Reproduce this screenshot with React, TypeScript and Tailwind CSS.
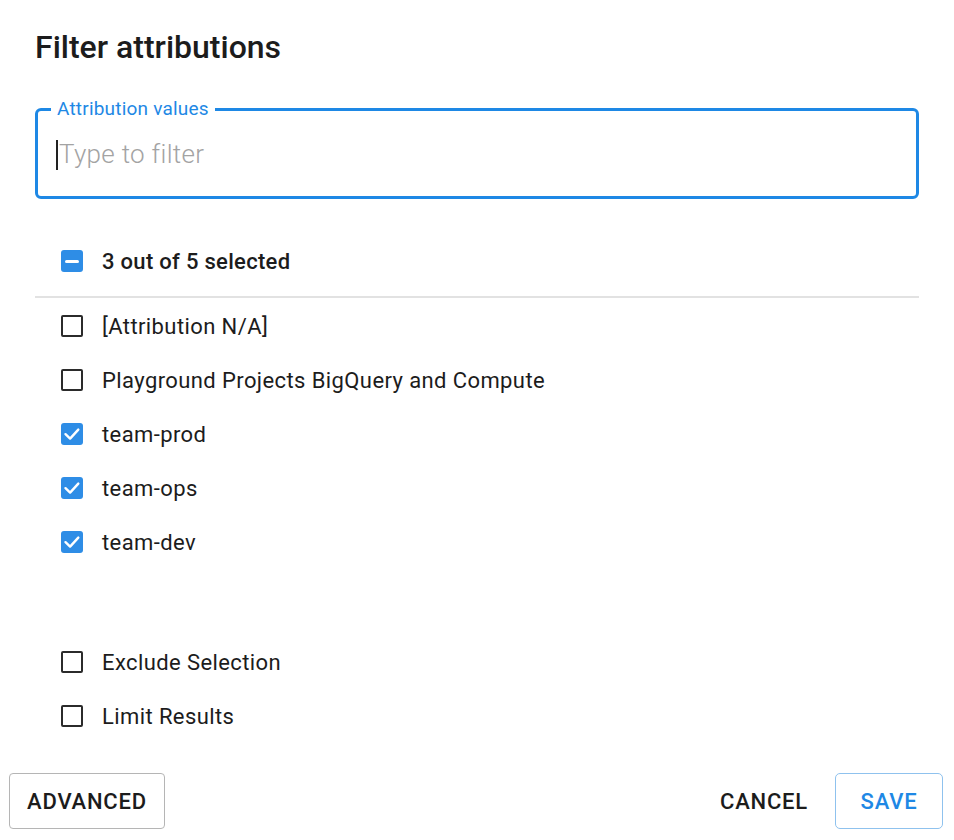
import React, { useState } from 'react';

type Item = { label: string; checked: boolean };

const Box: React.FC<{ checked: boolean; indeterminate?: boolean }> = ({ checked, indeterminate }) => {
  if (indeterminate) {
    return (
      <div className="w-[22px] h-[22px] rounded-[3px] bg-[#2e8de6] flex items-center justify-center shrink-0">
        <div className="w-[14px] h-[3px] rounded-full bg-white" />
      </div>
    );
  }
  if (checked) {
    return (
      <div className="w-[22px] h-[22px] rounded-[3px] bg-[#2e8de6] flex items-center justify-center shrink-0">
        <svg width="22" height="22" viewBox="0 0 22 22" fill="none">
          <path d="M4.5 11.2l4.6 4.4 8.2-9" stroke="white" strokeWidth="2.4" strokeLinecap="round" strokeLinejoin="round" />
        </svg>
      </div>
    );
  }
  return <div className="w-[22px] h-[22px] rounded-[2px] border-2 border-[#2b2b2b] shrink-0" />;
};

const Row: React.FC<{ item: Item; onToggle: () => void }> = ({ item, onToggle }) => (
  <div onClick={onToggle} className="h-[54px] flex items-center gap-[19px] pl-[26px] cursor-pointer">
    <Box checked={item.checked} />
    <span className="text-[22px] tracking-[0.4px] text-[#1c1c1c]">{item.label}</span>
  </div>
);

const App: React.FC = () => {
  const [items, setItems] = useState<Item[]>([
    { label: '[Attribution N/A]', checked: false },
    { label: 'Playground Projects BigQuery and Compute', checked: false },
    { label: 'team-prod', checked: true },
    { label: 'team-ops', checked: true },
    { label: 'team-dev', checked: true },
  ]);
  const [exclude, setExclude] = useState(false);
  const [limit, setLimit] = useState(false);

  const selected = items.filter(i => i.checked).length;

  const toggle = (idx: number) => {
    setItems(prev => prev.map((it, i) => (i === idx ? { ...it, checked: !it.checked } : it)));
  };

  return (
    <div className="w-[954px] h-[840px] bg-white font-['Roboto',sans-serif] text-[#1c1c1c] relative">
      <div className="px-[35px] pt-[26px]">
        <h1 className="text-[32px] font-medium leading-[42px]">Filter attributions</h1>

        {/* Search field */}
        <div className="relative mt-[40px] h-[91px] border-[3px] border-[#1e88e5] rounded-[6px] flex items-center px-[18px]">
          <span className="absolute -top-[13px] left-[13px] bg-white px-[6px] text-[19px] leading-[22px] tracking-[0.2px] text-[#1e88e5]">
            Attribution values
          </span>
          <div className="flex items-center mt-[2px]">
            <div className="w-[2px] h-[30px] bg-[#222]" />
            <span className="ml-[1px] text-[26px] tracking-[0.3px] text-[#a3a3a3] font-light">Type to filter</span>
          </div>
        </div>

        {/* Select all */}
        <div className="mt-[39px] h-[46px] flex items-center gap-[19px] pl-[26px]">
          <Box checked={false} indeterminate={selected > 0 && selected < items.length} />
          <span className="text-[22px] tracking-[0.3px] font-medium">{selected} out of {items.length} selected</span>
        </div>
        <div className="mt-[12px] h-[2px] bg-[#e2e2e2]" />

        <div className="mt-[1px]">
          {items.map((it, i) => (
            <Row key={it.label} item={it} onToggle={() => toggle(i)} />
          ))}
        </div>

        <div className="mt-[66px]">
          <Row item={{ label: 'Exclude Selection', checked: exclude }} onToggle={() => setExclude(v => !v)} />
          <Row item={{ label: 'Limit Results', checked: limit }} onToggle={() => setLimit(v => !v)} />
        </div>
      </div>

      {/* Footer */}
      <div className="flex items-center justify-between pl-[9px] pr-[11px] mt-[30px]">
        <button className="h-[56px] w-[156px] border border-[#b5b5b5] rounded-[4px] text-[22px] font-medium tracking-[0.8px] text-[#1c1c1c]">
          ADVANCED
        </button>
        <div className="flex items-center gap-[27px]">
          <button className="h-[56px] text-[22px] font-medium tracking-[0.8px] text-[#1c1c1c]">CANCEL</button>
          <button className="h-[56px] w-[108px] border border-[#8fc2ee] rounded-[5px] text-[22px] font-medium tracking-[0.8px] text-[#1e88e5]">
            SAVE
          </button>
        </div>
      </div>
    </div>
  );
};

export default App;
